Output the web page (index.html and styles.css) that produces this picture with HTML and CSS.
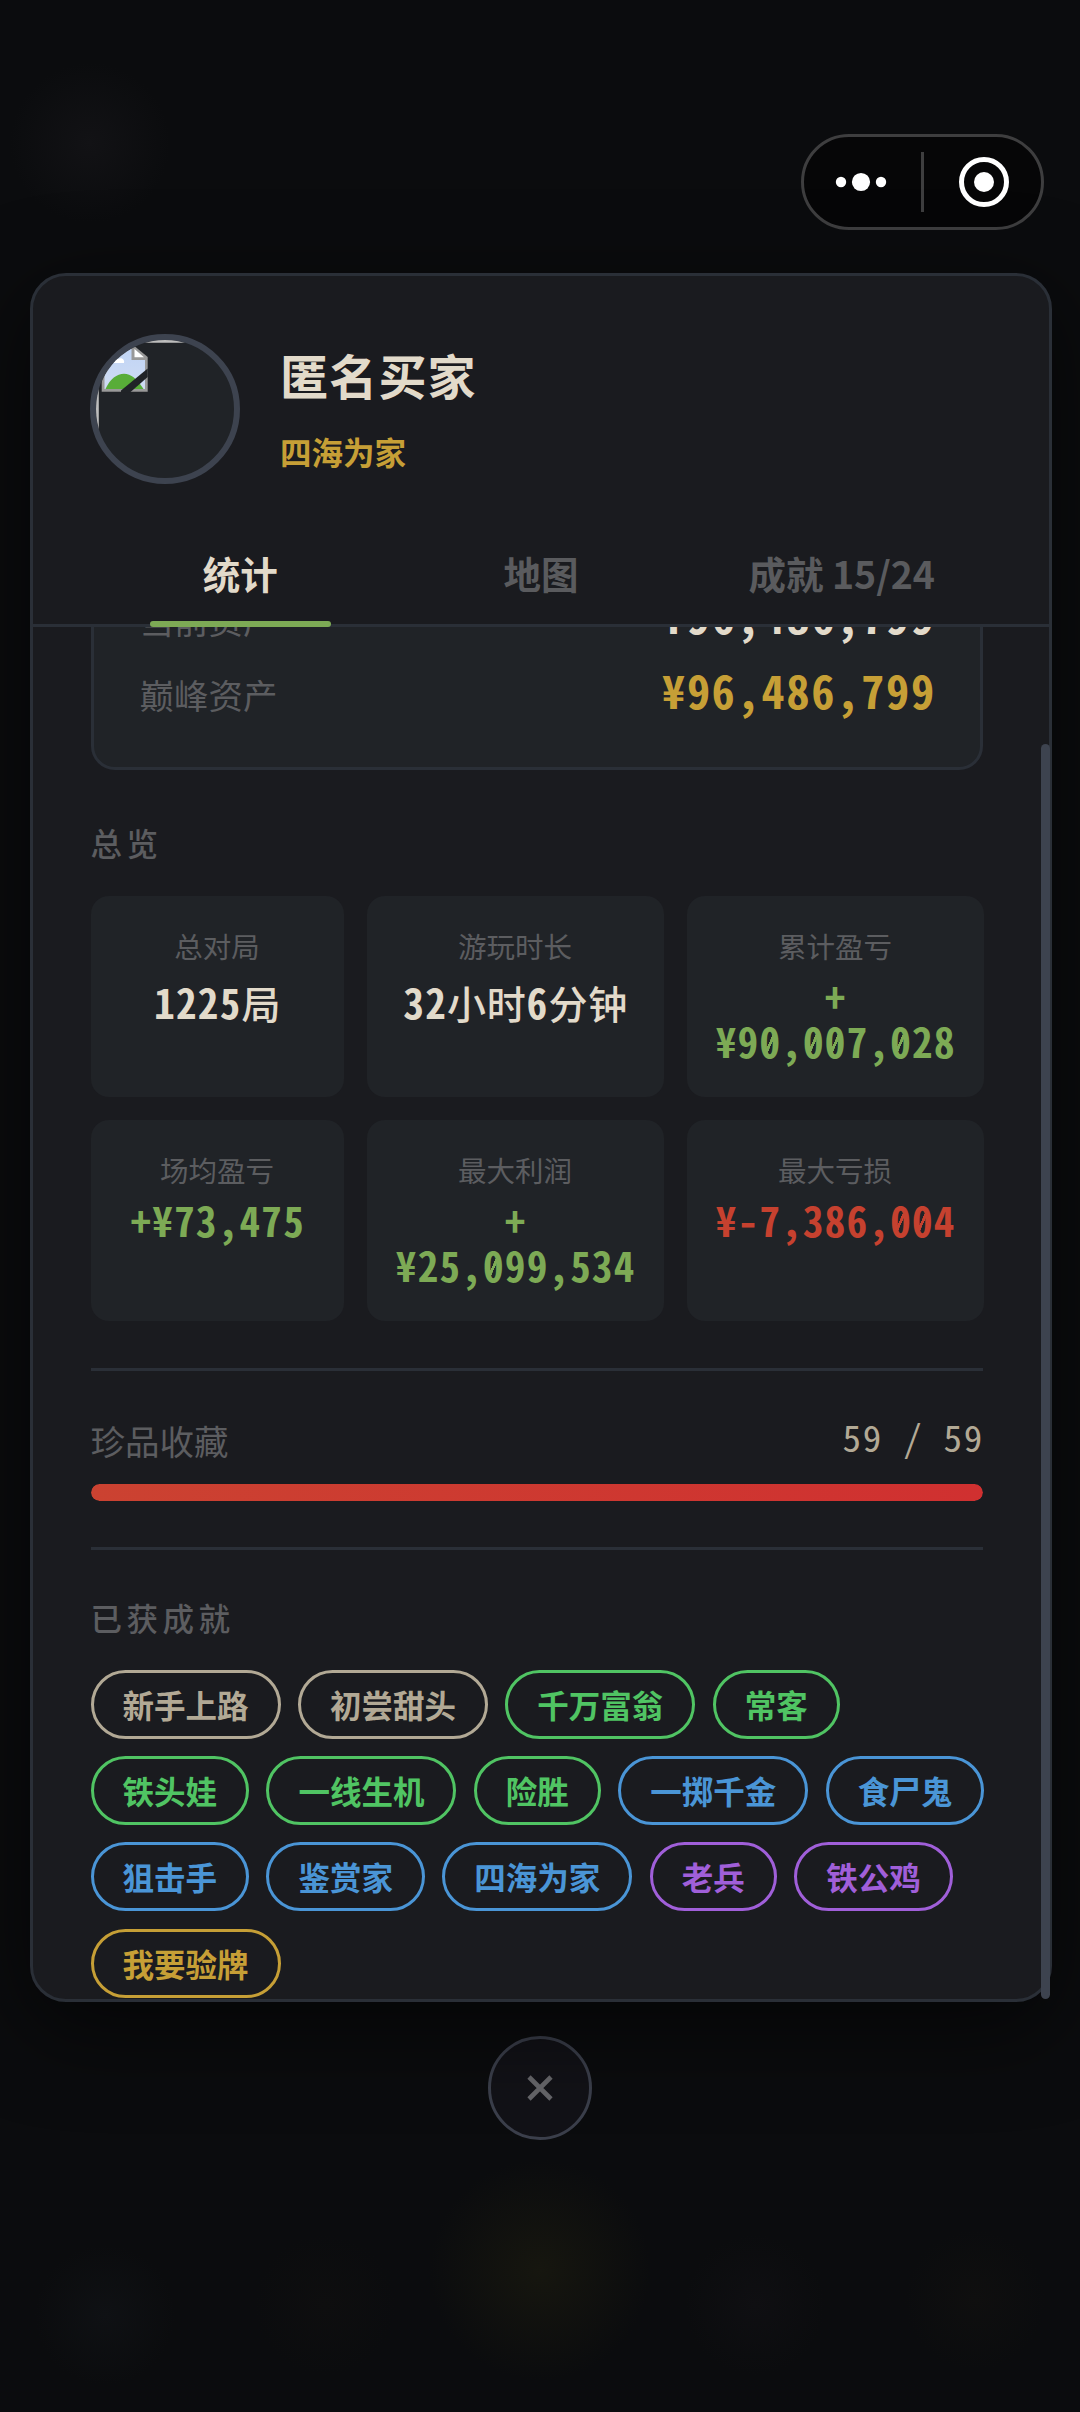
FILE: index.html
```html
<!DOCTYPE html>
<html lang="zh-CN">
<head>
<meta charset="utf-8">
<title>匿名买家</title>
<link rel="stylesheet" href="styles.css">
</head>
<body>
<div class="screen">
  <div class="capsule">
    <svg class="capsule-icon" width="60" height="60" viewBox="0 0 60 60" fill="#fff"><circle cx="10" cy="30" r="5.2"/><circle cx="30" cy="30" r="9.1"/><circle cx="50" cy="30" r="5.2"/></svg>
    <span class="capsule-line"></span>
    <svg class="capsule-icon" width="60" height="60" viewBox="0 0 60 60"><circle cx="30" cy="30" r="22.5" fill="none" stroke="#fff" stroke-width="5"/><circle cx="30" cy="30" r="10" fill="#fff"/></svg>
  </div>

  <main class="panel">
    <header class="profile">
      <div class="avatar">
        <svg width="138" height="138" viewBox="0 0 138 138">
          <defs><linearGradient id="sky" x1="0" y1="0" x2="0" y2="1"><stop offset="0" stop-color="#c0d4f5"/><stop offset="1" stop-color="#cfdcf3"/></linearGradient></defs>
          <path d="M0 0H138V2.8H2.8V138H0Z" fill="#bdbdbd"/>
          <path d="M5.7 5.7H38L51.7 17V51.7H5.7Z" fill="#999"/>
          <path d="M8.5 8.5H35.5V20H49V49H8.5Z" fill="url(#sky)"/>
          <path d="M38.5 9L48 17.2H38.5Z" fill="#fff"/>
          <path d="M14 22c0-5 6-6 8-3 4-2 7 1 6 4H14Z" fill="#fff"/>
          <path d="M9.5 49C14 39 21 33.8 28 33.8S41 39 47.5 49Z" fill="#58ad38"/>
          <path d="M51.7 28.5L25 50.5V52.5H34L51.7 37Z" fill="#202327"/>
        </svg>
      </div>
      <div class="who">
        <h1 class="name">匿名买家</h1>
        <p class="rank">四海为家</p>
      </div>
    </header>
    <nav class="tabs">
      <span class="tab active">统计</span>
      <span class="tab">地图</span>
      <span class="tab">成就 15/24</span>
    </nav>

    <div class="scroll">
      <section class="assets">
        <div class="asset-row"><span class="label">当前资产</span><span class="amount">¥96,486,799</span></div>
        <div class="asset-row"><span class="label">巅峰资产</span><span class="amount gold">¥96,486,799</span></div>
      </section>

      <h2 class="title">总览</h2>
      <section class="stats">
        <div class="stat"><span class="stat-name">总对局</span><span class="value mixed">1225<b>局</b></span></div>
        <div class="stat"><span class="stat-name">游玩时长</span><span class="value mixed">32<b>小时</b>6<b>分钟</b></span></div>
        <div class="stat"><span class="stat-name">累计盈亏</span><span class="value gain">+<br>¥9<i>0</i>,<i>0</i><i>0</i>7,<i>0</i>28</span></div>
        <div class="stat"><span class="stat-name">场均盈亏</span><span class="value gain">+¥73,475</span></div>
        <div class="stat"><span class="stat-name">最大利润</span><span class="value gain">+<br>¥25,<i>0</i>99,534</span></div>
        <div class="stat"><span class="stat-name">最大亏损</span><span class="value loss">¥-7,386,<i>0</i><i>0</i>4</span></div>
      </section>

      <section class="collection">
        <div class="collection-row"><span class="label">珍品收藏</span><span class="count">59 / 59</span></div>
        <div class="bar"><div class="fill" style="width:100%"></div></div>
      </section>

      <h2 class="title earned">已获成就</h2>
      <section class="chips">
        <span class="chip">新手上路</span><span class="chip">初尝甜头</span><span class="chip green">千万富翁</span><span class="chip green">常客</span>
        <span class="chip green">铁头娃</span><span class="chip green">一线生机</span><span class="chip green">险胜</span><span class="chip blue">一掷千金</span><span class="chip blue">食尸鬼</span>
        <span class="chip blue">狙击手</span><span class="chip blue">鉴赏家</span><span class="chip blue">四海为家</span><span class="chip purple">老兵</span><span class="chip purple">铁公鸡</span>
        <span class="chip yellow">我要验牌</span>
      </section>
    </div>
    <div class="thumb"></div>
  </main>

  <button class="close" aria-label="关闭"><svg width="30" height="30" viewBox="0 0 30 30"><path d="M4 4L26 26M26 4L4 26" stroke="#66666a" stroke-width="4.6"/></svg></button>
</div>
</body>
</html>
```
FILE: styles.css
```css
* { box-sizing: border-box; }

body {
  margin: 0;
  background: #0b0c0e;
  font-family: "Noto Sans CJK SC", "Noto Sans", sans-serif;
}

h1, h2, p { margin: 0; }

.screen {
  width: 1080px;
  height: 2412px;
  overflow: hidden;
  display: flex;
  flex-direction: column;
  background:
    radial-gradient(circle 110px at 540px 2270px, #16160f, transparent),
    radial-gradient(circle 70px at 105px 2315px, #0f1114, transparent),
    radial-gradient(circle 70px at 325px 2305px, #0e0e0f, transparent),
    radial-gradient(circle 70px at 755px 2305px, #0f0f12, transparent),
    radial-gradient(circle 70px at 975px 2300px, #0f0f0f, transparent),
    radial-gradient(circle 80px at 90px 143px, #121215, transparent),
    #0b0c0e;
}

.capsule {
  align-self: flex-end;
  flex: none;
  width: 243px;
  height: 96px;
  margin: 134px 36px 0 0;
  border: 3px solid #3e3e3f;
  border-radius: 48px;
  background: #060607;
  display: flex;
  align-items: center;
  padding-left: 27px;
}
.capsule-line { width: 3px; height: 60px; margin: 0 30px; background: #3e3e3f; }
.capsule-icon { flex: none; }

.panel {
  position: relative;
  flex: none;
  width: 1022px;
  height: 1729px;
  margin: 43px 0 0 30px;
  border: 3px solid #2a2f37;
  border-radius: 36px;
  background: #1a1b1f;
  box-shadow: 0 24px 90px rgba(0, 0, 0, .6);
}

.profile {
  height: 248px;
  padding: 58px 57px 0;
  display: flex;
  gap: 40px;
}
.avatar {
  flex: none;
  width: 150px;
  height: 150px;
  border: 6px solid #3d434f;
  border-radius: 50%;
  overflow: hidden;
  background: #202327;
}
.avatar svg { display: block; }
.name {
  margin-top: 4px;
  color: #e2daca;
  font-size: 48px;
  font-weight: 700;
  line-height: 72px;
  letter-spacing: 1.2px;
}
.rank {
  margin-top: 17px;
  color: #c69f36;
  font-size: 31.5px;
  font-weight: 700;
  line-height: 48px;
}

.tabs {
  height: 103px;
  padding: 0 57px;
  border-bottom: 3px solid #2a2f37;
  display: grid;
  grid-template-columns: repeat(3, 1fr);
}
.tab {
  position: relative;
  height: 100px;
  color: #5a5b5e;
  font-size: 37.5px;
  font-weight: 700;
  line-height: 97px;
  text-align: center;
}
.tab.active { color: #e2daca; }
.tab.active::after {
  content: "";
  position: absolute;
  z-index: 1;
  left: 60px;
  right: 60px;
  bottom: -3px;
  height: 6px;
  border-radius: 3px;
  background: #7daa55;
}

.scroll {
  height: 1372px;
  overflow: hidden;
  padding: 0 66px 0 57.5px;
}

.assets {
  height: 240px;
  margin-top: -97px;
  padding: 0 46px 36px;
  border: 3px solid #2a2f37;
  border-radius: 24px;
  background: #202327;
  display: flex;
  flex-direction: column;
  justify-content: flex-end;
}
.asset-row {
  height: 75px;
  display: flex;
  justify-content: space-between;
  align-items: center;
}
.label { color: #5c5d60; font-size: 34.5px; line-height: 50px; }
.amount, .value, .count { font-family: "Noto Sans Mono CJK SC", "DejaVu Sans Mono", monospace; }
.amount {
  color: #e2daca;
  font-size: 46px;
  font-weight: 700;
  line-height: 60px;
  letter-spacing: 1.9px;
  margin: -10px -1.9px 0 0;
}
.gold { color: #c69f36; }

.title {
  margin-top: 48px;
  color: #5c5d60;
  font-size: 31.5px;
  font-weight: 500;
  line-height: 48px;
  letter-spacing: 4.5px;
}

.stats {
  margin-top: 30px;
  display: grid;
  grid-template-columns: 253px 297px 297px;
  grid-auto-rows: 201px;
  gap: 23px;
}
.stat {
  border-radius: 18px;
  background: #202327;
  display: flex;
  flex-direction: column;
  align-items: center;
  padding-top: 29px;
}
.stat-name { color: #5c5d60; font-size: 28.5px; line-height: 42px; }
.value {
  margin: 6px 0 0 1.5px;
  color: #e2daca;
  font-size: 41px;
  font-weight: 700;
  line-height: 45px;
  letter-spacing: 1.3px;
  text-align: center;
  white-space: nowrap;
}
.value.mixed { margin-top: 12px; }
.value b {
  font-family: "Noto Sans CJK SC", sans-serif;
  font-size: 39px;
  font-weight: 500;
  letter-spacing: .8px;
}
/* slashed zero */
.value i {
  display: inline-block;
  height: 45px;
  font-style: normal;
  vertical-align: top;
  background: linear-gradient(to bottom right, transparent 40%, currentColor 41%, currentColor 59%, transparent 60%) 6.2px 16.5px / 8px 18px no-repeat;
}
.value.gain { color: #7daa55; }
.value.loss { color: #c6412f; }

.collection {
  height: 182px;
  margin-top: 47px;
  border-top: 3px solid #2a2f37;
  border-bottom: 3px solid #2a2f37;
  padding-top: 44px;
}
.collection-row { height: 69px; display: flex; justify-content: space-between; }
.count {
  color: #b2a995;
  font-size: 37px;
  line-height: 44px;
  letter-spacing: 1.7px;
  margin: -1px -1px 0 0;
}
.bar { height: 17px; border-radius: 9px; background: #202327; overflow: hidden; }
.fill { height: 100%; border-radius: 9px; background: linear-gradient(90deg, #cb4231, #d03030); }

.title.earned { margin-top: 43px; }

.chips {
  width: 897px;
  margin-top: 28.5px;
  display: flex;
  flex-wrap: wrap;
  gap: 17.4px;
}
.chip {
  height: 69px;
  padding: 0 29px;
  border: 3px solid;
  border-radius: 35px;
  color: #b2a995;
  font-size: 31.5px;
  font-weight: 700;
  line-height: 62px;
}
.green { color: #50c463; }
.blue { color: #4a95d6; }
.purple { color: #a05fd9; }
.yellow { color: #c69f36; }

.thumb {
  position: absolute;
  right: -1px;
  top: 468px;
  width: 9px;
  height: 1255px;
  border-radius: 5px;
  background: #3d434f;
}

.close {
  align-self: center;
  flex: none;
  width: 104px;
  height: 104px;
  margin-top: 34px;
  padding: 0;
  border: 3px solid #3b3f4b;
  border-radius: 50%;
  background: #121217;
  display: flex;
  align-items: center;
  justify-content: center;
}
```
